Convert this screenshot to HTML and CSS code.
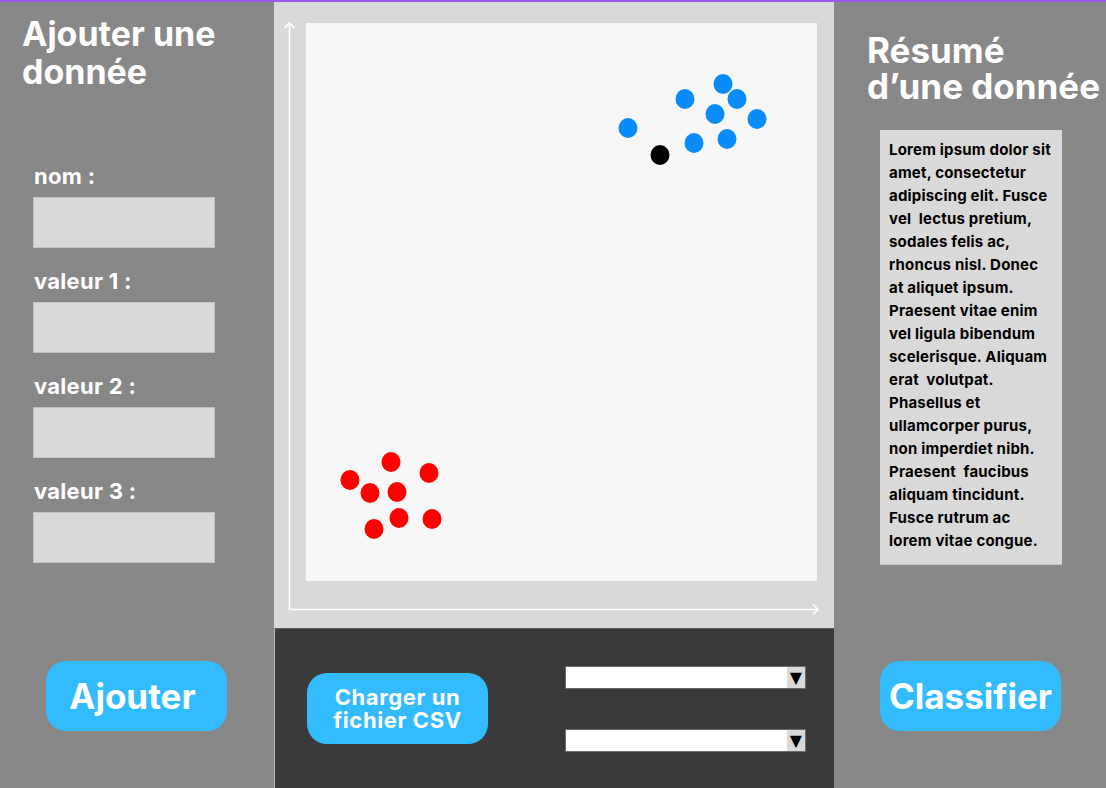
FILE: index.html
```html
<!DOCTYPE html>
<html lang="fr">
<head>
<meta charset="utf-8">
<title>Classification</title>
<link rel="stylesheet" href="styles.css">
</head>
<body>
<div class="topbar"></div>
<div class="app">
  <section class="panel left">
    <h1 class="title title-left">Ajouter une<br>donnée</h1>
    <form class="form">
      <div class="field"><label class="label">nom :</label><div class="input"></div></div>
      <div class="field"><label class="label">valeur 1 :</label><div class="input"></div></div>
      <div class="field"><label class="label">valeur 2 :</label><div class="input"></div></div>
      <div class="field"><label class="label">valeur 3 :</label><div class="input"></div></div>
    </form>
    <div class="btn-wrap"><button class="btn btn-big btn-add" type="button">Ajouter</button></div>
  </section>

  <section class="middle">
    <div class="chart">
      <div class="plot">
        <svg class="dots" width="511" height="558" viewBox="0 0 511 558">
          <g fill="#0a8bfa">
            <ellipse cx="322" cy="105" rx="9.5" ry="10"/>
            <ellipse cx="379" cy="76" rx="9.5" ry="10"/>
            <ellipse cx="417" cy="61" rx="9.5" ry="10"/>
            <ellipse cx="431" cy="76" rx="9.5" ry="10"/>
            <ellipse cx="409" cy="91" rx="9.5" ry="10"/>
            <ellipse cx="451" cy="96" rx="9.5" ry="10"/>
            <ellipse cx="388" cy="120" rx="9.5" ry="10"/>
            <ellipse cx="421" cy="116" rx="9.5" ry="10"/>
          </g>
          <ellipse cx="354" cy="132" rx="9.5" ry="10" fill="#000"/>
          <g fill="#ff0000">
            <ellipse cx="44" cy="457" rx="9.5" ry="10"/>
            <ellipse cx="85" cy="439" rx="9.5" ry="10"/>
            <ellipse cx="123" cy="450" rx="9.5" ry="10"/>
            <ellipse cx="64" cy="470" rx="9.5" ry="10"/>
            <ellipse cx="91" cy="469" rx="9.5" ry="10"/>
            <ellipse cx="68" cy="506" rx="9.5" ry="10"/>
            <ellipse cx="93" cy="495" rx="9.5" ry="10"/>
            <ellipse cx="126" cy="496" rx="9.5" ry="10"/>
          </g>
        </svg>
      </div>
      <svg class="axes" width="560" height="626" viewBox="0 0 560 626">
        <g stroke="#ffffff" stroke-width="1.6" fill="none">
          <line x1="15.5" y1="21" x2="15.5" y2="607.5"/>
          <line x1="15" y1="607.5" x2="544" y2="607.5"/>
          <polyline points="10.5,26 15.5,21 20.5,26"/>
          <polyline points="539,602.5 544,607.5 539,612.5"/>
        </g>
      </svg>
    </div>
    <div class="controls">
      <button class="btn btn-csv" type="button">Charger un<br>fichier CSV</button>
      <div class="selects">
        <div class="select"><span class="select-arrow">▼</span></div>
        <div class="select"><span class="select-arrow">▼</span></div>
      </div>
    </div>
  </section>

  <section class="panel right">
    <h1 class="title title-right">Résumé<br>d’une donnée</h1>
    <div class="summary"><p class="summary-text">Lorem ipsum dolor sit
amet, consectetur
adipiscing elit. Fusce
vel  lectus pretium,
sodales felis ac,
rhoncus nisl. Donec
at aliquet ipsum.
Praesent vitae enim
vel ligula bibendum
scelerisque. Aliquam
erat  volutpat.
Phasellus et
ullamcorper purus,
non imperdiet nibh.
Praesent  faucibus
aliquam tincidunt.
Fusce rutrum ac
lorem vitae congue.</p></div>
    <div class="btn-wrap"><button class="btn btn-big" type="button">Classifier</button></div>
  </section>
</div>
</body>
</html>
```

FILE: styles.css
```css
* { box-sizing: border-box; }

html, body {
  margin: 0;
  padding: 0;
}

body {
  width: 1106px;
  height: 788px;
  overflow: hidden;
  font-family: Inter, "Liberation Sans", sans-serif;
  font-weight: 700;
  background: #888888;
}

.topbar {
  height: 2px;
  background: #9b56f2;
}

.app {
  display: grid;
  grid-template-columns: 274px 560px 272px;
  height: 786px;
}

.panel {
  background: #888888;
  display: flex;
  flex-direction: column;
  color: #ffffff;
}

.title {
  margin: 0;
  font-weight: 700;
  color: #ffffff;
  white-space: nowrap;
}

.title-left {
  font-size: 34px;
  line-height: 38px;
  padding: 13px 0 0 22px;
}

.title-right {
  font-size: 35px;
  line-height: 36px;
  padding: 30px 0 0 33px;
}

.form {
  display: flex;
  flex-direction: column;
  gap: 20px;
  margin: 72px 0 0 33px;
}

.field {
  display: flex;
  flex-direction: column;
}

.label {
  font-size: 22px;
  line-height: 26px;
  letter-spacing: 0.3px;
  margin: 0 0 8px 1px;
  color: #ffffff;
}

.input {
  width: 182px;
  height: 51px;
  background: #d9d9d9;
  border: 1px solid #c2c2c2;
}

.btn-wrap {
  margin-top: auto;
  padding: 0 0 57px 46px;
}

.btn {
  border: none;
  background: #33bbff;
  color: #ffffff;
  font-family: Inter, "Liberation Sans", sans-serif;
  font-weight: 700;
  cursor: pointer;
  padding: 0;
}

.btn-big {
  width: 181px;
  height: 70px;
  border-radius: 20px;
  font-size: 35px;
  line-height: 40px;
}

.btn-add {
  padding-right: 8px;
}

.middle {
  display: flex;
  flex-direction: column;
}

.chart {
  position: relative;
  height: 626px;
  background: #d9d9d9;
  padding: 21px 17px 47px 32px;
}

.plot {
  width: 511px;
  height: 558px;
  background: #f7f7f7;
}

.dots {
  display: block;
}

.axes {
  position: absolute;
  left: 0;
  top: 0;
  pointer-events: none;
}

.controls {
  flex: 1;
  background: #3a3a3a;
  border-top: 1px solid #5e5e5e;
  border-left: 1px solid #b9b9b9;
  display: flex;
  align-items: center;
  justify-content: space-between;
  padding: 0 28px 0 32px;
}

.btn-csv {
  width: 181px;
  height: 71px;
  border-radius: 20px;
  font-size: 22px;
  line-height: 23px;
  letter-spacing: 0.6px;
}

.selects {
  display: flex;
  flex-direction: column;
  gap: 40px;
}

.select {
  width: 241px;
  height: 23px;
  background: #ffffff;
  border: 1px solid #6a6a6a;
  display: flex;
  justify-content: flex-end;
}

.select-arrow {
  width: 18px;
  height: 100%;
  background: #d9d9d9;
  color: #000000;
  font-family: "DejaVu Sans", sans-serif;
  font-size: 16px;
  line-height: 22px;
  text-align: center;
}

.summary {
  margin: 26px 0 0 46px;
  width: 182px;
  height: 435px;
  background: #d9d9d9;
  border-bottom: 1px solid #c4c4c4;
  padding: 8px 0 0 9px;
}

.summary-text {
  margin: 0;
  white-space: pre;
  color: #000000;
  font-size: 15px;
  line-height: 23px;
  letter-spacing: 0.2px;
  font-weight: 700;
}
```
